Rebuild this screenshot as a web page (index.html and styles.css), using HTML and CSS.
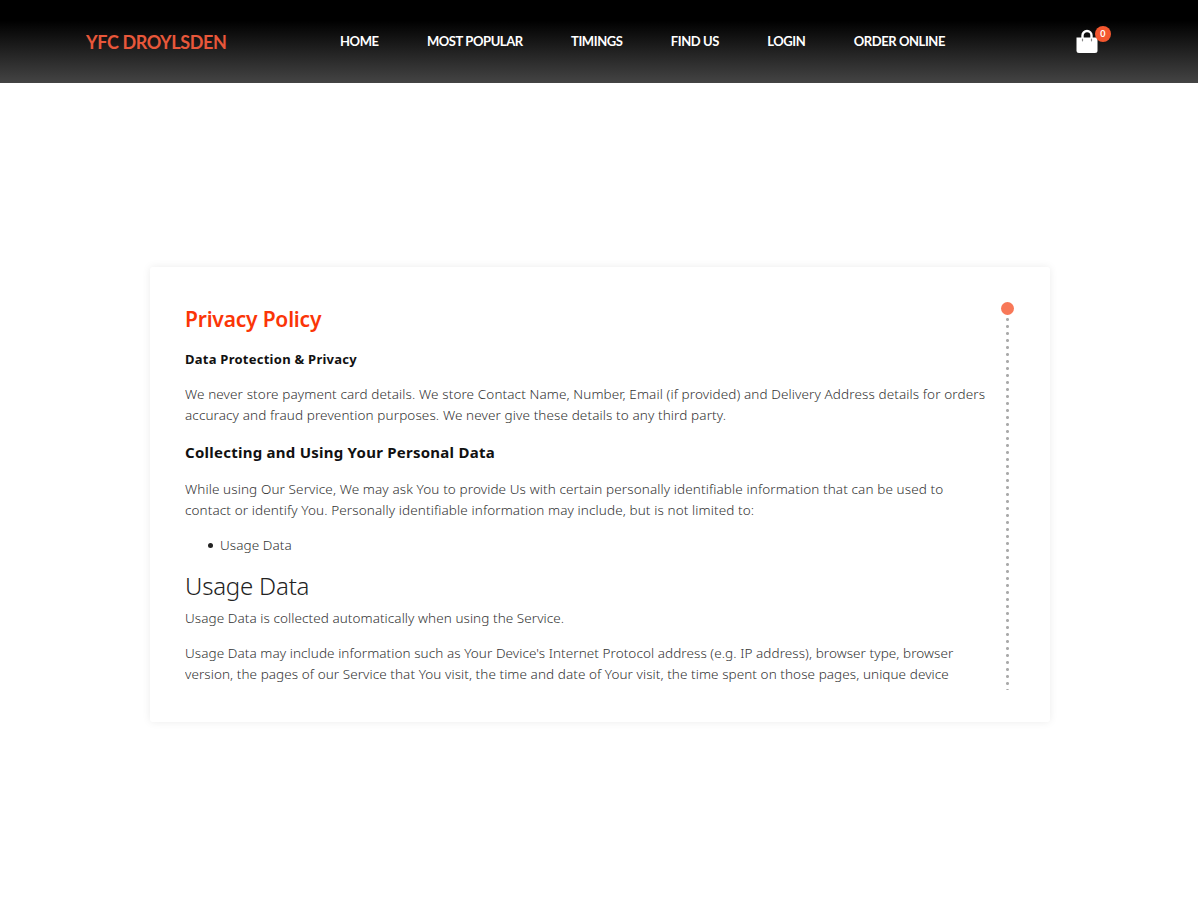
FILE: index.html
```html
<!DOCTYPE html>
<html lang="en">
<head>
    <meta charset="UTF-8">
    <meta name="viewport" content="width=device-width, initial-scale=1.0">
    <title>YFC Droylsden - Privacy Policy</title>
    <link rel="stylesheet" href="styles.css">
</head>
<body>
    <header class="header">
        <a class="logo" href="#">YFC DROYLSDEN</a>
        <nav class="nav">
            <a href="#">HOME</a>
            <a href="#">MOST POPULAR</a>
            <a href="#">TIMINGS</a>
            <a href="#">FIND US</a>
            <a href="#">LOGIN</a>
            <a href="#">ORDER ONLINE</a>
        </nav>
        <a class="cart" href="#">
            <svg width="22" height="25" viewBox="0 0 22 25">
                <path d="M0.5 8.5H21.5V21.5Q21.5 24 19 24H3Q0.5 24 0.5 21.5Z" fill="#fff"/>
                <path d="M6.5 10V6.5a4.5 4.5 0 0 1 9 0V10" fill="none" stroke="#fff" stroke-width="2.4"/>
                <path d="M6.5 10v1.8M15.5 10v1.8" stroke="#888" stroke-width="1.2" stroke-linecap="round"/>
            </svg>
            <span class="cart-count">0</span>
        </a>
    </header>

    <main class="policy-card">
        <div class="policy-content">
            <h1>Privacy Policy</h1>
            <h5>Data Protection &amp; Privacy</h5>
            <p class="intro">We never store payment card details. We store Contact Name, Number, Email (if provided) and Delivery Address details for orders<br>accuracy and fraud prevention purposes. We never give these details to any third party.</p>
            <h4>Collecting and Using Your Personal Data</h4>
            <p class="intro">While using Our Service, We may ask You to provide Us with certain personally identifiable information that can be used to<br>contact or identify You. Personally identifiable information may include, but is not limited to:</p>
            <ul>
                <li>Usage Data</li>
            </ul>
            <h2>Usage Data</h2>
            <p>Usage Data is collected automatically when using the Service.</p>
            <p>Usage Data may include information such as Your Device's Internet Protocol address (e.g. IP address), browser type, browser<br>version, the pages of our Service that You visit, the time and date of Your visit, the time spent on those pages, unique device</p>
        </div>
        <div class="scroll-track">
            <div class="scroll-thumb"></div>
        </div>
    </main>
</body>
</html>
```
FILE: styles.css
```css
* {
    margin: 0;
    padding: 0;
    box-sizing: border-box;
}

body {
    min-height: 100vh;
    background-color: #fff;
    font-family: 'Noto Sans', 'Open Sans', sans-serif;
    font-size: 13.5px;
    font-weight: 300;
    letter-spacing: 0.07px;
    line-height: 21px;
    color: #333;
}

a {
    text-decoration: none;
}

.header {
    display: flex;
    align-items: center;
    width: 1198px;
    height: 83px;
    padding: 0 88px 0 86px;
    background: linear-gradient(#000 0%, #000 25%, #444 100%);
    font-family: Lato, sans-serif;
}

.logo {
    width: 254px;
    color: #e8573a;
    font-size: 18px;
    font-weight: 700;
    letter-spacing: -0.4px;
    padding-top: 2px;
}

.nav {
    display: flex;
    flex: 1;
    gap: 48.3px;
    padding-bottom: 1px;
}

.nav a {
    color: #fff;
    font-size: 13px;
    font-weight: 700;
    letter-spacing: -0.42px;
    white-space: nowrap;
}

.cart {
    position: relative;
    width: 34px;
    height: 25px;
}

.cart svg {
    display: block;
}

.cart-count {
    position: absolute;
    top: -3px;
    left: 19px;
    width: 16px;
    height: 16px;
    border-radius: 50%;
    background-color: #f4572f;
    color: #fff;
    font-size: 9px;
    font-weight: 700;
    line-height: 16px;
    text-align: center;
}

.policy-card {
    display: flex;
    justify-content: space-between;
    width: 900px;
    height: 455px;
    margin: 184px auto 0;
    padding: 35px 36px 0 35px;
    background-color: #fff;
    border-radius: 3px;
    box-shadow: 0 0 9px rgba(0, 0, 0, 0.08);
}

.policy-content {
    height: 388px;
    overflow: hidden;
    white-space: nowrap;
}

.policy-content h1 {
    margin: 4px 0 17px;
    color: #fb3507;
    font-size: 21px;
    font-weight: 600;
    letter-spacing: -0.2px;
    line-height: 26px;
}

.policy-content h5 {
    margin-bottom: 14px;
    color: #111;
    font-size: 13px;
    font-weight: 700;
    letter-spacing: 0.25px;
    line-height: 21px;
}

.policy-content p {
    margin-bottom: 14px;
}

.policy-content .intro {
    letter-spacing: 0.11px;
}

.policy-content h4 {
    margin-bottom: 15px;
    color: #111;
    font-size: 15px;
    font-weight: 700;
    letter-spacing: 0.25px;
    line-height: 24px;
}

.policy-content ul {
    margin-bottom: 13px;
    padding-left: 23px;
    list-style: none;
}

.policy-content li {
    display: flex;
    align-items: center;
    gap: 7px;
}

.policy-content li::before {
    content: "";
    width: 5px;
    height: 5px;
    border-radius: 50%;
    background-color: #222;
}

.policy-content h2 {
    margin-bottom: 5px;
    color: #222;
    font-size: 24px;
    font-weight: 300;
    letter-spacing: -0.2px;
    line-height: 34px;
}

.scroll-track {
    width: 13px;
    height: 388px;
    background: radial-gradient(circle, #aaa 1.1px, transparent 1.9px) center top / 7px 7px repeat-y;
}

.scroll-thumb {
    width: 13px;
    height: 13px;
    border-radius: 50%;
    background-color: #f87858;
}
```
